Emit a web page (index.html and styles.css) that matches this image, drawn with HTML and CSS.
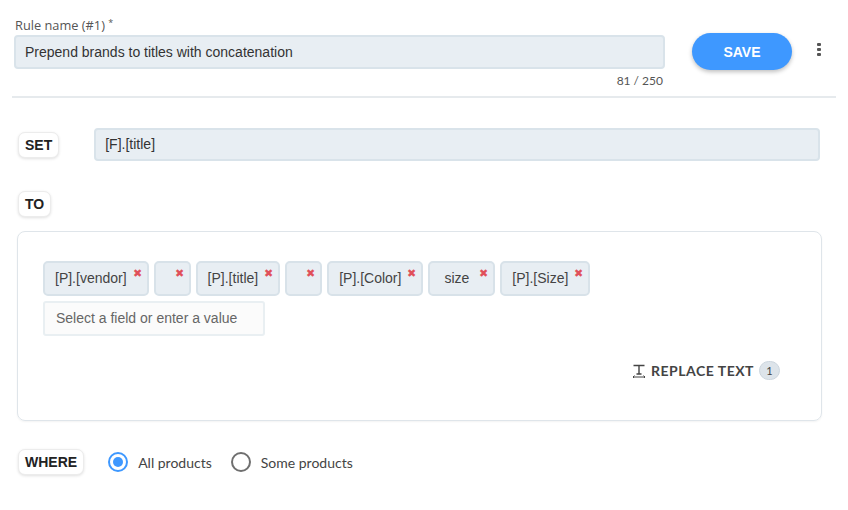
FILE: index.html
```html
<!DOCTYPE html>
<html>
<head>
<meta charset="utf-8">
<link rel="stylesheet" href="styles.css">
</head>
<body>
<div class="page">
  <div class="header">
    <div class="name-col">
      <div class="label">Rule name (#1) <sup>*</sup></div>
      <div class="input name-input">Prepend brands to titles with concatenation</div>
      <div class="counter">81 / 250</div>
    </div>
    <button class="save">SAVE</button>
    <div class="kebab"><span></span><span></span><span></span></div>
  </div>
  <div class="divider"></div>

  <div class="row set-row">
    <div class="chip">SET</div>
    <div class="input set-input">[F].[title]</div>
  </div>

  <div class="row to-row">
    <div class="chip">TO</div>
  </div>

  <div class="box">
    <div class="tags">
      <div class="tag">[P].[vendor]<span class="x">✖</span></div>
      <div class="tag empty"><span class="x">✖</span></div>
      <div class="tag">[P].[title]<span class="x">✖</span></div>
      <div class="tag empty"><span class="x">✖</span></div>
      <div class="tag">[P].[Color]<span class="x">✖</span></div>
      <div class="tag value">size<span class="x">✖</span></div>
      <div class="tag">[P].[Size]<span class="x">✖</span></div>
    </div>
    <div class="placeholder">Select a field or enter a value</div>
    <div class="replace">
      <svg width="14" height="14" viewBox="0 0 14 14" fill="none" stroke="#444" stroke-width="1.4">
        <path d="M1.5 1.5h11M7 1.5v8.5M4.5 10h5"/>
        <path d="M1 13h12M2.5 11.6 1 13l1.5 1.4M11.5 11.6 13 13l-1.5 1.4" stroke-width="1"/>
      </svg>
      <span class="replace-text">REPLACE TEXT</span>
      <span class="badge">1</span>
    </div>
  </div>

  <div class="row where-row">
    <div class="chip">WHERE</div>
    <label class="radio"><span class="circle on"></span>All products</label>
    <label class="radio"><span class="circle"></span>Some products</label>
  </div>
</div>
</body>
</html>
```
FILE: styles.css
```css
* { box-sizing: border-box; }
body {
  margin: 0;
  background: #fff;
  font-family: "Liberation Sans", Arial, sans-serif;
  color: #333;
}
.page {
  width: 848px;
  height: 510px;
  padding: 0 12px 0 12px;
}
.header {
  display: flex;
  align-items: flex-start;
  padding: 17px 0 0 2px;
}
.name-col {
  width: 651px;
}
.label {
  font-family: "Open Sans", Lato, sans-serif;
  font-size: 12.8px;
  color: #555;
  line-height: 16px;
  margin-left: 1px;
  margin-bottom: 2px;
}
.label sup {
  font-size: 9px;
  vertical-align: 4px;
  line-height: 0;
}
.input {
  background: #e8eef3;
  border: 2px solid #d9e3ea;
  border-radius: 4px;
  font-size: 14px;
  color: #333;
}
.name-input {
  height: 34px;
  line-height: 30px;
  padding-left: 9px;
}
.counter {
  text-align: right;
  font-family: Lato, "Noto Sans", sans-serif;
  font-size: 12px;
  color: #555;
  margin-top: 5px;
  padding-right: 2px;
  line-height: 14px;
}
.save {
  margin-left: 27px;
  margin-top: 16px;
  width: 100px;
  height: 37px;
  border: none;
  border-radius: 19px;
  background: #3e98ff;
  color: #fff;
  font-family: "Liberation Sans", Arial, sans-serif;
  font-weight: bold;
  font-size: 14px;
  box-shadow: 0 2px 4px rgba(0,0,0,0.25);
}
.kebab {
  margin-left: 25px;
  margin-top: 26px;
  display: flex;
  flex-direction: column;
  gap: 2px;
}
.kebab span {
  width: 4px;
  height: 3px;
  background: #555;
  border-radius: 1px;
}
.divider {
  height: 2px;
  background: #e6eaed;
  margin-top: 8px;
  width: 824px;
}
.row {
  display: flex;
  align-items: center;
  padding-left: 6px;
}
.chip {
  height: 26px;
  padding: 0 6px;
  background: #fff;
  border: 1px solid #ececec;
  border-radius: 7px;
  box-shadow: 0 1px 3px rgba(0,0,0,0.12);
  font-family: "Liberation Sans", Arial, sans-serif;
  font-weight: bold;
  font-size: 14px;
  line-height: 24px;
  color: #222;
}
.set-row {
  margin-top: 30px;
}
.set-input {
  margin-left: 35px;
  width: 726px;
  height: 33px;
  line-height: 29px;
  padding-left: 9px;
}
.to-row {
  margin-top: 30px;
}
.box {
  margin-top: 14px;
  margin-left: 5px;
  width: 805px;
  height: 190px;
  border: 1px solid #dfe5ea;
  border-radius: 8px;
  box-shadow: 0 1px 2px rgba(0,0,0,0.05);
  padding: 29px 0 0 25px;
}
.tags {
  display: flex;
  gap: 5px;
}
.tag {
  position: relative;
  height: 35px;
  background: #e8eef3;
  border: 2px solid #d8e2e9;
  border-radius: 5px;
  padding: 0 20px 0 10px;
  font-size: 14px;
  line-height: 31px;
  color: #444;
}
.tag.empty {
  width: 37px;
  padding: 0;
}
.tag.value {
  padding: 0 24px 0 14px;
}
.x {
  position: absolute;
  right: 5px;
  top: 5px;
  font-size: 11px;
  line-height: 11px;
  color: #e0505a;
}
.placeholder {
  margin-top: 5px;
  width: 222px;
  height: 35px;
  background: #fbfbfb;
  border: 2px solid #e9eff2;
  border-radius: 3px;
  font-size: 14px;
  color: #666;
  line-height: 31px;
  padding-left: 11px;
}
.replace {
  display: flex;
  align-items: center;
  justify-content: flex-end;
  margin-top: 25px;
  margin-right: 41px;
  font-family: Lato, "Noto Sans", sans-serif;
  font-weight: bold;
  font-size: 14px;
  letter-spacing: 0.5px;
  color: #444;
}
.replace svg {
  margin-right: 5px;
}
.badge {
  margin-left: 5px;
  width: 21px;
  height: 19px;
  border-radius: 10px;
  background: #dde4ea;
  border: 1px solid #cdd6de;
  font-size: 11px;
  font-weight: normal;
  letter-spacing: 0;
  text-align: center;
  line-height: 17px;
  color: #444;
}
.where-row {
  margin-top: 28px;
}
.radio {
  display: flex;
  align-items: center;
  font-family: Lato, "Noto Sans", sans-serif;
  font-size: 14px;
  color: #444;
  margin-left: 24px;
}
.radio + .radio {
  margin-left: 19px;
}
.circle {
  width: 20px;
  height: 20px;
  border: 2px solid #6f6f6f;
  border-radius: 50%;
  margin-right: 10px;
  position: relative;
}
.circle.on {
  border-color: #3e98ff;
}
.circle.on::after {
  content: "";
  position: absolute;
  left: 3px;
  top: 3px;
  width: 10px;
  height: 10px;
  border-radius: 50%;
  background: #3e98ff;
}
```
